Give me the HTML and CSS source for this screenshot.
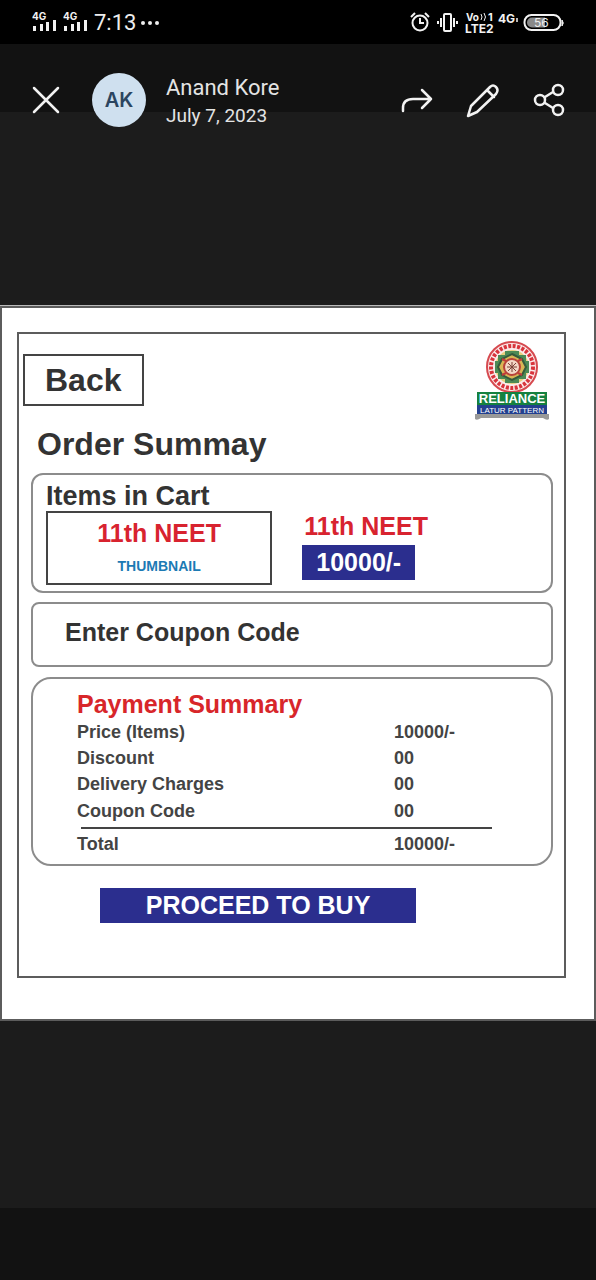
FILE: index.html
```html
<!DOCTYPE html>
<html lang="en">
<head>
<meta charset="utf-8">
<meta name="viewport" content="width=device-width, initial-scale=1">
<title>Order Summary</title>
<link rel="stylesheet" href="styles.css">
</head>
<body>
<div class="status">
  <div class="status-side">
    <svg width="58" height="24" viewBox="0 0 58 24" fill="#f2f2f2" aria-hidden="true">
      <g class="net"><text x="0" y="9">4G</text><text x="31" y="9">4G</text></g>
      <path d="M1 15h3v5h-3zM8 13h3v7h-3zM14 11h3v9h-3zM21 9h3v11h-3zM32 15h3v5h-3zM39 13h3v7h-3zM45 11h3v9h-3zM52 9h3v11h-3z"/>
    </svg>
    <span class="time">7:13</span>
    <svg width="20" height="6" viewBox="0 0 20 6" fill="#eee" aria-hidden="true"><circle cx="3" cy="3" r="2"/><circle cx="10" cy="3" r="2"/><circle cx="17" cy="3" r="2"/></svg>
  </div>
  <div class="status-side">
    <svg width="154" height="26" viewBox="0 0 154 26" fill="none" stroke="#f2f2f2" stroke-width="2" aria-hidden="true">
      <circle cx="10" cy="13" r="7.500"/><path d="M10 8v5h4M1 7l4-4M19 7l-4-4"/>
      <rect x="34" y="4" width="7" height="17" rx="1"/><path d="M31 8v9M44 8v9M28 11v3M47 11v3" stroke-width="2"/>
      <g class="net" fill="#f2f2f2" stroke="none"><text x="56" y="11">Vo</text><text x="78" y="11" class="one">1</text><text x="55" y="23" class="lte">LTE2</text><text x="88" y="13" class="lte">4G</text></g>
      <path d="M71 4q2 3 0 6M74 3q3 4 0 8" stroke-width="1"/><path d="M107 8v4" stroke-width="1.500"/>
      <rect x="114.500" y="5" width="36" height="15" rx="7" stroke-width="2"/><path d="M152 10q2.500 3 0 6z" fill="#ddd" stroke-width="1"/>
      <path d="M122 7.500h13v10h-13a5 5 0 0 1 0-10z" fill="#8a8a8a" stroke="none"/>
      <text x="124" y="17" class="battery" fill="#eee" stroke="none">56</text>
    </svg>
  </div>
</div>

<header class="bar">
  <button class="icon" type="button" aria-label="Close">
    <svg width="30" height="30" viewBox="0 0 30 30"><path d="M3 3l24 24M27 3L3 27"/></svg>
  </button>
  <span class="avatar">AK</span>
  <div class="who">
    <span>Anand Kore</span>
    <time class="date" datetime="2023-07-07">July 7, 2023</time>
  </div>
  <div class="actions">
    <button class="icon" type="button" aria-label="Forward">
      <svg width="34" height="36" viewBox="0 0 34 36"><path d="M3 29v-3q0-9 10-9h18M22 8l9 9-9 9"/></svg>
    </button>
    <button class="icon" type="button" aria-label="Edit">
      <svg width="36" height="36" viewBox="0 0 36 36"><path d="M3 34l3-10L25 5q3-3 6 0t0 7L12 30zM22 8l7 7"/></svg>
    </button>
    <button class="icon" type="button" aria-label="Share">
      <svg width="34" height="36" viewBox="0 0 34 36"><circle cx="8" cy="18" r="5"/><circle cx="26" cy="8" r="5"/><circle cx="26" cy="28" r="5"/><path d="M13 15l8-5M13 21l8 5"/></svg>
    </button>
  </div>
</header>

<main class="stage">
  <div class="sheet">
    <div class="frame">
      <div class="top">
        <button class="back" type="button">Back</button>
        <svg class="logo" width="76" height="80" viewBox="0 0 76 80" role="img" aria-label="Reliance Latur Pattern">
          <path d="M1 74h74v5q-2 2-6-1H7q-4 3-6 1z" fill="#999"/>
          <circle cx="38" cy="27" r="26" fill="#fbeaea"/>
          <circle cx="38" cy="27" r="25" fill="none" stroke="#d64a50" stroke-width="2"/>
          <circle cx="38" cy="27" r="21" fill="none" stroke="#d8343c" stroke-width="4" stroke-dasharray="3 1.500"/>
          <circle cx="38" cy="27" r="17" fill="#e9cf7d"/>
          <path d="M31 11h14v4h7v6h3v12h-3v6h-7v4H31v-4h-7v-6h-3V21h3v-6h7z" fill="#4c8a55"/>
          <path d="M38 14l10 5 4 8-4 8-10 5-10-5-4-8 4-8z" fill="#d9b555" stroke="#365a3c" stroke-width="2"/>
          <circle cx="38" cy="27" r="8" fill="#f3d6c6" stroke="#b8423a" stroke-width="2"/>
          <path d="M33 27h10M38 22v10M34 23l8 8M42 23l-8 8" stroke="#7b4338" stroke-width="1"/>
          <path d="M28 19l4 2M48 19l-4 2M28 35l4-2M48 35l-4-2" stroke="#c23b3b" stroke-width="2"/>
          <path d="M3 52h70v13H3z" fill="#15813f"/>
          <path d="M3 65h70v9H3z" fill="#23408f"/>
          <text x="38" y="63" class="logo-name">RELIANCE</text>
          <text x="38" y="73" class="logo-sub">LATUR PATTERN</text>
        </svg>
      </div>

      <h1 class="title">Order Summay</h1>

      <section class="panel cart">
        <h2 class="cart-title">Items in Cart</h2>
        <div class="item">
          <div class="thumb">
            <span class="course">11th NEET</span>
            <span class="thumb-note">THUMBNAIL</span>
          </div>
          <div class="offer">
            <span class="course">11th NEET</span>
            <span class="price">10000/-</span>
          </div>
        </div>
      </section>

      <div class="panel coupon">
        <input class="coupon-input" type="text" aria-label="Enter Coupon Code" placeholder="Enter Coupon Code">
      </div>

      <section class="panel payment">
        <h2 class="payment-title">Payment Summary</h2>
        <table class="bill">
          <tbody>
            <tr><th scope="row">Price (Items)</th><td>10000/-</td></tr>
            <tr><th scope="row">Discount</th><td>00</td></tr>
            <tr><th scope="row">Delivery Charges</th><td>00</td></tr>
            <tr><th scope="row">Coupon Code</th><td>00</td></tr>
          </tbody>
          <tfoot>
            <tr><th scope="row">Total</th><td>10000/-</td></tr>
          </tfoot>
        </table>
      </section>

      <button class="buy" type="button">PROCEED TO BUY</button>
    </div>
  </div>
</main>
<footer class="dock"></footer>
</body>
</html>
```
FILE: styles.css
```css
* {
  box-sizing: border-box;
}

body {
  margin: 0;
  min-height: 100vh;
  display: flex;
  flex-direction: column;
  background: #1c1c1c;
  color: #333;
  font-family: "Liberation Sans", Arial, sans-serif;
  font-weight: bold;
}

button {
  font: inherit;
  cursor: pointer;
}

h1,
h2 {
  margin: 0;
}

/* Phone status bar */
.status {
  display: flex;
  justify-content: space-between;
  align-items: center;
  height: 44px;
  padding: 2px 32px 0;
  background: #000;
  color: #eee;
}

.status-side {
  display: flex;
  align-items: center;
  gap: 4px;
}

.time {
  font: 400 22px/24px Roboto, sans-serif;
}

.net {
  font: 700 10px Inter, sans-serif;
}

.one {
  font-size: 11px;
}

.lte {
  font-size: 12px;
}

.battery {
  font: 400 12px Inter, sans-serif;
}

/* Viewer header */
.bar {
  display: flex;
  align-items: center;
  height: 112px;
  padding: 0 30px 0 31px;
  background: linear-gradient(#121212 68px, #1c1c1c 68px);
  color: #e4e4e4;
  font-family: Roboto, sans-serif;
  font-weight: 400;
}

.icon {
  display: flex;
  padding: 0;
  border: 0;
  background: none;
}

.icon svg {
  fill: none;
  stroke: #f2f2f2;
  stroke-width: 2.5;
  stroke-linecap: round;
  stroke-linejoin: round;
}

.avatar {
  width: 54px;
  height: 54px;
  margin-left: 31px;
  border-radius: 50%;
  background: #cfe0ef;
  color: #2b4560;
  font: 600 20px/54px Inter, sans-serif;
  text-align: center;
}

.who {
  display: flex;
  flex-direction: column;
  margin-left: 20px;
  padding-top: 4px;
  font-size: 22px;
  line-height: 28px;
}

.date {
  font-size: 19px;
}

.actions {
  display: flex;
  gap: 31px;
  margin-left: auto;
}

/* Shared picture */
.stage {
  flex: 1;
  padding-top: 150px;
}

.sheet {
  padding: 24px 28px 41px 15px;
  border: 2px solid #5c5c5c;
  background: #fff;
  box-shadow: 0 -1px 0 #bbb;
}

.frame {
  padding-bottom: 53px;
  border: 2px solid #5c5c5c;
}

.top {
  display: flex;
  justify-content: space-between;
  align-items: center;
  padding: 6px 14px 0 4px;
}

.back {
  padding: 0 20px;
  border: 2px solid #444;
  background: #fff;
  color: #333;
  font-size: 32px;
  line-height: 48px;
}

.logo-name {
  fill: #fff;
  font: 700 13px "Liberation Sans", sans-serif;
  text-anchor: middle;
}

.logo-sub {
  fill: #fff;
  font: 400 8px "Liberation Sans", sans-serif;
  text-anchor: middle;
}

.title {
  margin: 6px 18px 11px;
  font-size: 32px;
  line-height: 36px;
}

.panel {
  margin: 0 11px 9px 12px;
  border: 2px solid #8c8c8c;
  border-radius: 12px;
}

.cart {
  padding: 6px 13px;
}

.cart-title {
  font-size: 27px;
  line-height: 30px;
}

.item {
  display: flex;
  gap: 30px;
}

.thumb {
  display: flex;
  flex-direction: column;
  align-items: center;
  flex: 0 0 46%;
  gap: 8px;
  padding: 5px 0 7px;
  border: 2px solid #444;
}

.course {
  color: #d8232f;
  font-size: 25px;
  line-height: 30px;
}

.thumb-note {
  color: #1c7ab4;
  font-size: 14px;
  line-height: 20px;
}

.offer {
  display: flex;
  flex-direction: column;
  align-items: flex-start;
  gap: 4px;
}

.offer .course {
  padding-left: 2px;
}

.price {
  padding: 0 14px;
  background: #2b2e8e;
  color: #fff;
  font-size: 25px;
  line-height: 35px;
}

.coupon {
  margin-bottom: 10px;
  border-radius: 8px;
}

.coupon-input {
  display: block;
  width: 100%;
  padding: 13px 32px 18px;
  border: 0;
  background: none;
  color: #333;
  font: inherit;
  font-size: 25px;
  line-height: 30px;
}

.coupon-input::placeholder {
  color: #333;
  opacity: 1;
}

.payment {
  margin-bottom: 22px;
  padding: 10px 59px 5px 44px;
  border-radius: 20px;
}

.payment-title {
  color: #d8262a;
  font-size: 25px;
  line-height: 30px;
}

.bill {
  width: 100%;
  border-collapse: collapse;
  color: #444;
  font-size: 18px;
  line-height: 26px;
}

.bill th,
.bill td {
  padding: 0;
  text-align: left;
}

.bill td {
  width: 98px;
}

.bill tbody tr:last-child > * {
  padding: 1px 0 3px;
}

.bill tfoot th,
.bill tfoot td {
  padding: 4px 0 2px;
}

.bill tfoot tr {
  background: linear-gradient(#444, #444) right top / calc(100% - 4px) 2px no-repeat;
}

.buy {
  display: block;
  width: 58%;
  margin-left: 81px;
  padding: 0;
  border: 0;
  background: #2b2e8e;
  color: #fff;
  font-size: 25px;
  line-height: 35px;
}

.dock {
  height: 72px;
  background: #121212;
}
```
